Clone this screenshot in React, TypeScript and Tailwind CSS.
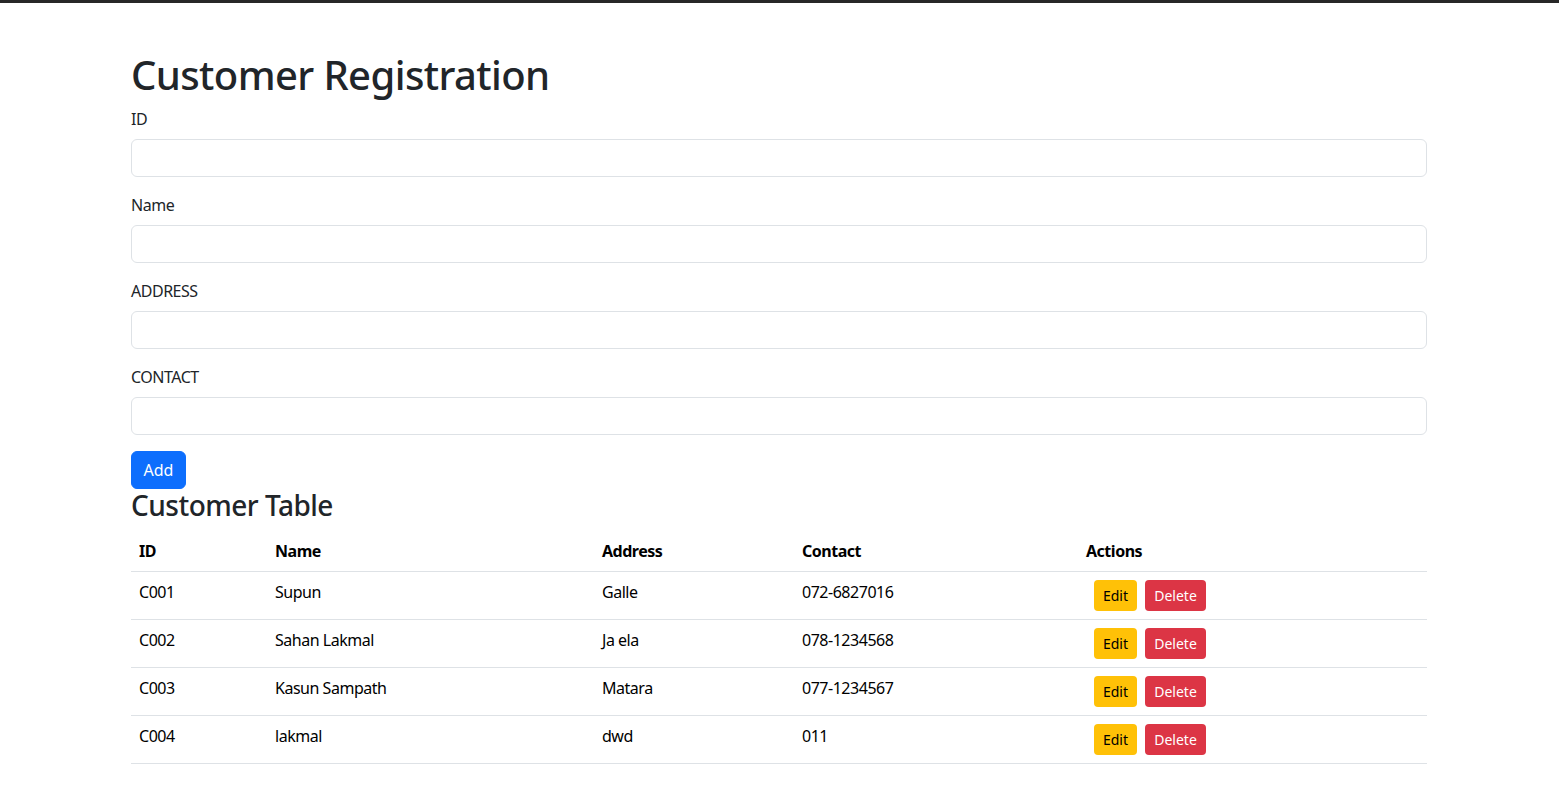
import React from "react";

const rows = [
  { id: "C001", name: "Supun", address: "Galle", contact: "072-6827016" },
  { id: "C002", name: "Sahan Lakmal", address: "Ja ela", contact: "078-1234568" },
  { id: "C003", name: "Kasun Sampath", address: "Matara", contact: "077-1234567" },
  { id: "C004", name: "lakmal", address: "dwd", contact: "011" },
];

function Field({ label }: { label: string }) {
  return (
    <div className="mb-4">
      <label className="block mb-2 text-[16px] leading-[24px] tracking-[-0.03em] text-[#212529]">{label}</label>
      <input
        type="text"
        className="block w-full h-[38px] px-3 border border-[#dee2e6] rounded-[6px] bg-white text-[16px] outline-none"
      />
    </div>
  );
}

export default function App() {
  return (
    <div
      className="min-h-screen bg-white text-[#212529]"
      style={{ fontFamily: '"Noto Sans", "Open Sans", sans-serif' }}
    >
      <div className="h-[3px] bg-[#282828]" />
      <div className="w-[1296px] ml-[131px] pt-[48px]">
        <h1 className="text-[40px] leading-[48px] font-medium tracking-[-0.015em] mb-2 text-[#212529]">Customer Registration</h1>
        <Field label="ID" />
        <Field label="Name" />
        <Field label="ADDRESS" />
        <Field label="CONTACT" />
        <button className="h-[38px] w-[55px] rounded-[6px] bg-[#0d6efd] text-white text-[16px] leading-[24px] border border-[#0d6efd]">
          Add
        </button>
        <h3 className="text-[28px] leading-[33.6px] font-medium tracking-[-0.018em] mb-2 text-[#212529]">Customer Table</h3>
        <table className="w-full border-collapse text-black text-[16px] leading-[24px] tracking-[-0.03em]">
          <thead>
            <tr className="border-b border-[#dee2e6]">
              <th className="w-[136px] text-left font-bold p-2 align-top">ID</th>
              <th className="w-[327px] text-left font-bold p-2 align-top">Name</th>
              <th className="w-[200px] text-left font-bold p-2 align-top">Address</th>
              <th className="w-[284px] text-left font-bold p-2 align-top">Contact</th>
              <th className="text-left font-bold p-2 align-top">Actions</th>
            </tr>
          </thead>
          <tbody>
            {rows.map((r) => (
              <tr key={r.id} className="border-b border-[#dee2e6]">
                <td className="p-2 align-top">{r.id}</td>
                <td className="p-2 align-top">{r.name}</td>
                <td className="p-2 align-top">{r.address}</td>
                <td className="p-2 align-top">{r.contact}</td>
                <td className="p-2 align-top">
                  <div className="flex gap-2 pl-2 tracking-normal">
                    <button className="h-[31px] w-[43px] rounded-[4px] bg-[#ffc107] text-black text-[14px] leading-[21px]">Edit</button>
                    <button className="h-[31px] w-[61px] rounded-[4px] bg-[#dc3545] text-white text-[14px] leading-[21px]">Delete</button>
                  </div>
                </td>
              </tr>
            ))}
          </tbody>
        </table>
      </div>
    </div>
  );
}
